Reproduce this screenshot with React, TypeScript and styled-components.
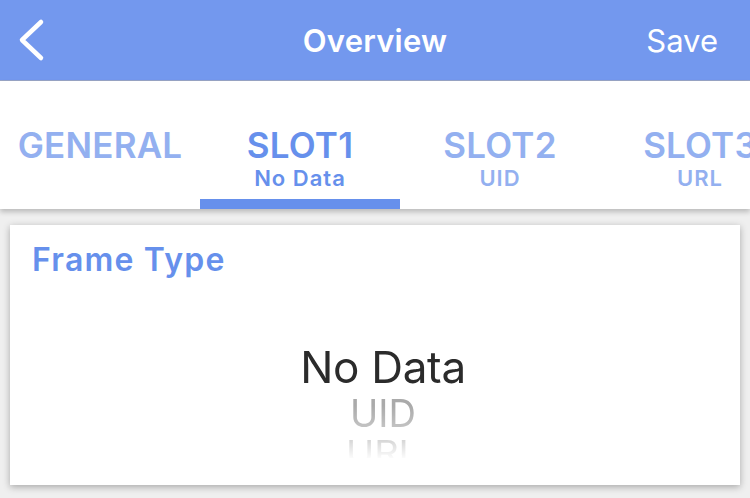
import React from "react";
import styled, { createGlobalStyle } from "styled-components";

const GlobalStyle = createGlobalStyle`
	html, body {
		margin: 0;
		padding: 0;
		background: #efefef;
		font-family: Inter, "Noto Sans", sans-serif;
	}
`;

const Page = styled.div`
	width: 750px;
	height: 498px;
	overflow: hidden;
	display: flex;
	flex-direction: column;
`;

const NavBar = styled.header`
	height: 80px;
	background: #7398ee;
	border-bottom: 1px solid #9aa6c6;
	display: grid;
	grid-template-columns: 150px 1fr 150px;
	align-items: center;
	color: #fff;
	flex-shrink: 0;
`;

const BackButton = styled.button`
	background: none;
	border: none;
	padding: 0 0 0 16px;
	height: 100%;
	display: flex;
	align-items: center;
	cursor: pointer;
`;

const NavTitle = styled.h1`
	margin: 0;
	text-align: center;
	font-size: 31px;
	font-weight: 600;
	letter-spacing: 0.2px;
`;

const NavAction = styled.span`
	text-align: right;
	padding-right: 32px;
	font-size: 31px;
	font-weight: 400;
`;

const TabBar = styled.nav`
	height: 128px;
	background: #fff;
	display: flex;
	overflow: hidden;
	box-shadow: 0 3px 5px rgba(0, 0, 0, 0.22);
	position: relative;
	z-index: 1;
	flex-shrink: 0;
`;

const Tab = styled.div<{ active?: boolean }>`
	flex: 0 0 200px;
	display: flex;
	flex-direction: column;
	align-items: center;
	padding-top: 44px;
	box-sizing: border-box;
	border-bottom: 10px solid ${(props) => (props.active ? "#6690ec" : "transparent")};
	color: ${(props) => (props.active ? "#6690ec" : "#93b0f0")};
`;

const TabLabel = styled.span`
	font-size: 35px;
	font-weight: 600;
	line-height: 40px;
	white-space: nowrap;
	letter-spacing: 0.2px;
`;

const TabSub = styled.span`
	font-size: 22px;
	font-weight: 600;
	line-height: 26px;
	letter-spacing: 1px;
`;

const Card = styled.section`
	margin: 16px 10px 0;
	height: 260px;
	background: #fff;
	box-shadow: 0 2px 7px rgba(0, 0, 0, 0.3);
	padding: 15px 22px 0;
	box-sizing: border-box;
	display: flex;
	flex-direction: column;
`;

const CardTitle = styled.h2`
	margin: 0;
	font-size: 32px;
	font-weight: 600;
	letter-spacing: 1.2px;
	color: #6690ec;
`;

const Picker = styled.div`
	margin-top: 63px;
	padding-left: 16px;
	height: 116px;
	overflow: hidden;
	display: flex;
	flex-direction: column;
	align-items: center;
	mask-image: linear-gradient(to bottom, #000 55%, rgba(0, 0, 0, 0.6) 80%, rgba(0, 0, 0, 0.05) 100%);
	-webkit-mask-image: linear-gradient(to bottom, #000 55%, rgba(0, 0, 0, 0.6) 80%, rgba(0, 0, 0, 0.05) 100%);
`;

const PickerItem = styled.div<{ selected?: boolean; depth: number }>`
	flex-shrink: 0;
	font-size: ${(props) => (props.selected ? 44 : 38)}px;
	line-height: ${(props) => (props.selected ? 50 : 42)}px;
	font-weight: 400;
	color: ${(props) => (props.selected ? "#2b2b2b" : "#aaaaaa")};
	letter-spacing: ${(props) => (props.selected ? "-0.3px" : "0")};
	transform: ${(props) => (props.depth > 1 ? "scaleY(0.85)" : "none")};
	transform-origin: top;
`;

const tabs = [
	{ label: "GENERAL" },
	{ label: "SLOT1", sub: "No Data", active: true },
	{ label: "SLOT2", sub: "UID" },
	{ label: "SLOT3", sub: "URL" },
];

const frameTypes = ["No Data", "UID", "URL"];

const ChevronLeft = () => (
	<svg width="30" height="44" viewBox="0 0 30 44">
		<path d="M25 4 L6 22 L25 40" fill="none" stroke="#fff" strokeWidth="4.5" strokeLinecap="round" strokeLinejoin="round" />
	</svg>
);

export default function App() {
	return (
		<Page>
			<GlobalStyle />
			<NavBar>
				<BackButton aria-label="Back">
					<ChevronLeft />
				</BackButton>
				<NavTitle>Overview</NavTitle>
				<NavAction>Save</NavAction>
			</NavBar>
			<TabBar>
				{tabs.map((t) => (
					<Tab key={t.label} active={t.active}>
						<TabLabel>{t.label}</TabLabel>
						{t.sub && <TabSub>{t.sub}</TabSub>}
					</Tab>
				))}
			</TabBar>
			<Card>
				<CardTitle>Frame Type</CardTitle>
				<Picker>
					{frameTypes.map((f, i) => (
						<PickerItem key={f} selected={i === 0} depth={i}>
							{f}
						</PickerItem>
					))}
				</Picker>
			</Card>
		</Page>
	);
}
